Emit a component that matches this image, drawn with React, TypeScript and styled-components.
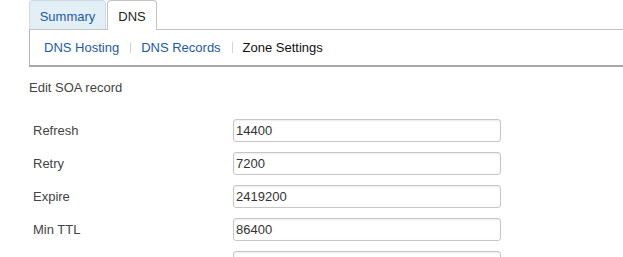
import React from 'react';
import styled, { createGlobalStyle } from 'styled-components';

const GlobalStyle = createGlobalStyle`
  body {
    margin: 0;
    background: #fff;
    font-family: 'Liberation Sans', Arial, sans-serif;
    font-size: 13px;
    color: #333;
  }
`;

const Page = styled.div`
  padding-left: 29px;
`;

const TabBar = styled.div`
  display: flex;
  gap: 1px;
  height: 29px;
  align-items: stretch;
`;

const Tab = styled.div<{ $active?: boolean }>`
  display: flex;
  align-items: center;
  justify-content: center;
  box-sizing: border-box;
  width: ${(p) => (p.$active ? '50px' : '77px')};
  border: 1px solid ${(p) => (p.$active ? '#c4c4c4' : '#cddbe4')};
  border-bottom: none;
  border-radius: 4px 4px 0 0;
  background: ${(p) => (p.$active ? '#fff' : '#e3eff6')};
  color: ${(p) => (p.$active ? '#222' : '#1c5ab0')};
  padding-top: 2px;
  position: relative;
  z-index: ${(p) => (p.$active ? 2 : 1)};
  margin-bottom: ${(p) => (p.$active ? '-1px' : '0')};
  height: ${(p) => (p.$active ? '30px' : '29px')};
`;

const Panel = styled.div`
  display: flex;
  align-items: center;
  border-top: 1px solid #c4c4c4;
  border-left: 1px solid #b4b4b4;
  border-bottom: 2px solid #a8a8a8;
  box-sizing: border-box;
  height: 38px;
  padding-left: 14px;
`;

const SubLink = styled.span<{ $current?: boolean }>`
  color: ${(p) => (p.$current ? '#111' : '#1c5ab0')};
`;

const Divider = styled.span`
  width: 1px;
  height: 11px;
  background: #d4d4d4;
  margin: 0 10px 0 11px;
`;

const Heading = styled.div`
  color: #444;
  margin: 13px 0 0;
  line-height: 15px;
`;

const Form = styled.div`
  display: grid;
  grid-template-columns: 200px 268px;
  row-gap: 10px;
  margin-top: 24px;
  padding-left: 4px;
  align-items: center;
`;

const Label = styled.div`
  color: #444;
`;

const Input = styled.input`
  box-sizing: border-box;
  height: 23px;
  width: 268px;
  border: 1px solid #c6c6c6;
  border-radius: 3px;
  box-shadow: inset 0 1px 2px rgba(0, 0, 0, 0.08);
  padding: 0 2px;
  font-family: 'Liberation Sans', Arial, sans-serif;
  font-size: 13px;
  color: #333;
  background: #fff;
  outline: none;
`;

const fields = [
  { label: 'Refresh', value: '14400' },
  { label: 'Retry', value: '7200' },
  { label: 'Expire', value: '2419200' },
  { label: 'Min TTL', value: '86400' },
  { label: '', value: '' },
];

export default function App() {
  return (
    <Page>
      <GlobalStyle />
      <TabBar>
        <Tab>Summary</Tab>
        <Tab $active>DNS</Tab>
      </TabBar>
      <Panel>
        <SubLink>DNS Hosting</SubLink>
        <Divider />
        <SubLink>DNS Records</SubLink>
        <Divider />
        <SubLink $current>Zone Settings</SubLink>
      </Panel>
      <Heading>Edit SOA record</Heading>
      <Form>
        {fields.map((f, i) => (
          <React.Fragment key={i}>
            <Label>{f.label}</Label>
            <Input defaultValue={f.value} readOnly />
          </React.Fragment>
        ))}
      </Form>
    </Page>
  );
}
